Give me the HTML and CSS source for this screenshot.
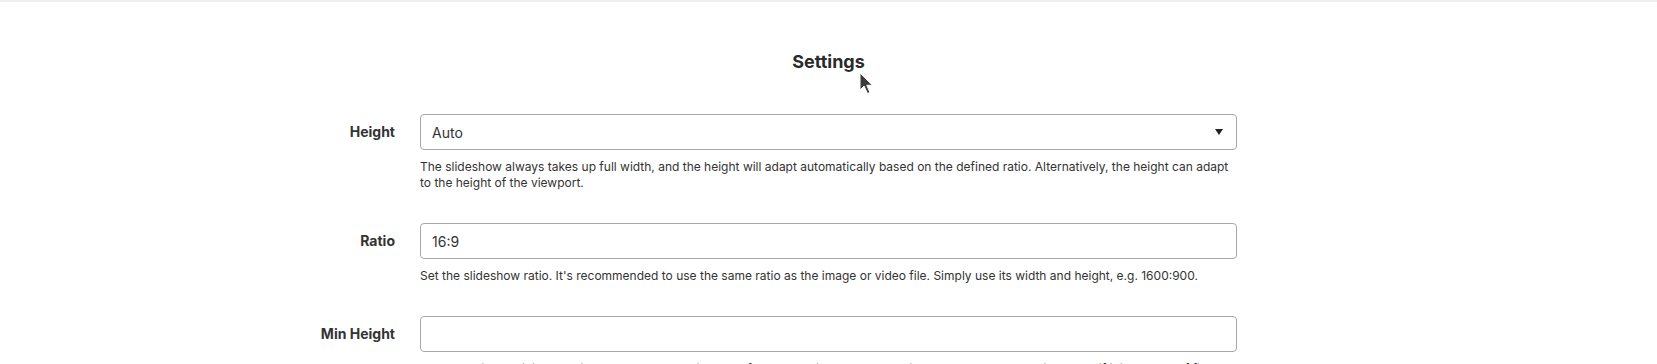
FILE: index.html
```html
<!DOCTYPE html>
<html lang="en">
<head>
  <meta charset="UTF-8">
  <title>Settings</title>
  <meta name="viewport" content="width=device-width,initial-scale=1">
  <link rel="stylesheet" href="styles.css">
</head>
<body>
  <div class="topbar"></div>

  <h1 class="title">Settings</h1>

  <!-- mouse pointer left in the screenshot -->
  <svg class="pointer" width="15" height="24" viewBox="0 0 15 24">
    <path d="M1 1 L1 18 L5 14 L8.5 21.5 L11 20.5 L7.8 13.3 L13.5 13.3 Z" fill="#3c3c3c" stroke="#fff" stroke-width="1"/>
  </svg>

  <form class="settings">
    <label class="field-label" for="height">Height</label>
    <div class="field">
      <div class="select-wrap">
        <select id="height">
          <option>Auto</option>
          <option>Viewport</option>
        </select>
      </div>
      <p class="help">The slideshow always takes up full width, and the height will adapt automatically based on the defined ratio. Alternatively, the height can adapt to the height of the viewport.</p>
    </div>

    <label class="field-label" for="ratio">Ratio</label>
    <div class="field">
      <input type="text" id="ratio" value="16:9">
      <p class="help">Set the slideshow ratio. It's recommended to use the same ratio as the image or video file. Simply use its width and height, e.g. 1600:900.</p>
    </div>

    <label class="field-label" for="minheight">Min Height</label>
    <div class="field">
      <input type="text" id="minheight">
      <p class="help">Use an optional minimum height to prevent the slideshow from becoming smaller than its content on small devices (e.g. if it is a cards of fixed height).</p>
    </div>
  </form>
</body>
</html>
```

FILE: styles.css
```css
*{box-sizing:border-box}
body{margin:0;font-family:Inter,"Noto Sans",Arial,sans-serif;color:#333;background:#fff;position:relative}
.topbar{height:2px;background:#efefef}
.title{margin:48px 0 40px;text-align:center;font-size:18px;line-height:24px;font-weight:700;color:#2b2b2b}
.pointer{position:absolute;left:859px;top:72px}

/* form grid: labels hang left of a centred input column */
.settings{display:grid;grid-template-columns:1fr 817px 1fr}
.field-label{grid-column:1;justify-self:end;padding-right:25px;font-size:14px;font-weight:700;line-height:36px;color:#333}
.field{grid-column:2;margin-bottom:32px}
.field input,.field select{
  display:block;width:100%;height:36px;padding:0 11px;border:1px solid #a8a8a8;border-radius:4px;
  font:inherit;font-size:14px;color:#333;background:#fff;outline:none
}
.select-wrap{position:relative}
.select-wrap select{appearance:none;-webkit-appearance:none}
.select-wrap::after{
  content:"";position:absolute;right:14px;top:15px;
  border-left:4px solid transparent;border-right:4px solid transparent;border-top:6px solid #222;pointer-events:none
}
.help{margin:9px 0 0;font-size:12px;line-height:16px;color:#333}
```
